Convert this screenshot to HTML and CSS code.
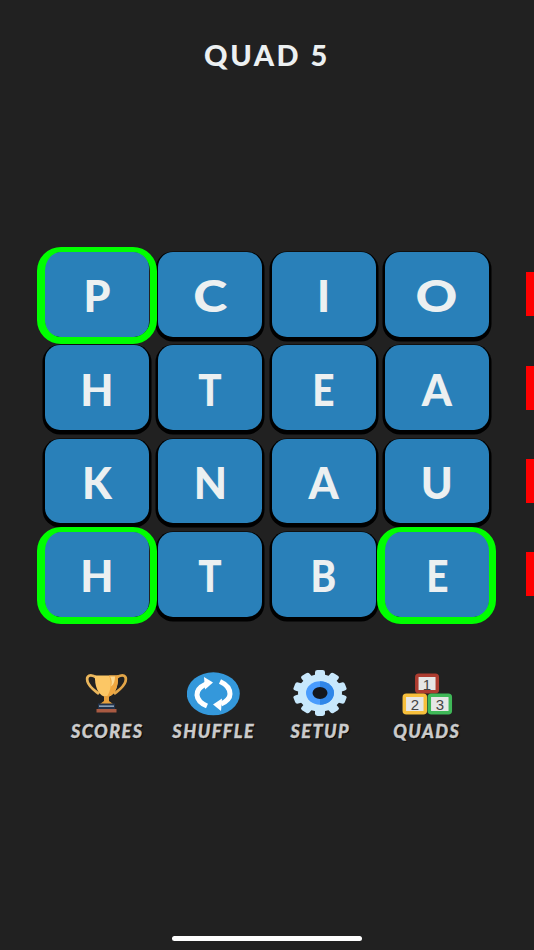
FILE: index.html
```html
<!DOCTYPE html>
<html lang="en">
<head>
<meta charset="utf-8">
<title>Quad 5</title>
<link rel="stylesheet" href="styles.css">
</head>
<body>
<main class="screen">
  <h1 class="title">QUAD 5</h1>
  <section class="board">
    <div class="row">
      <div class="tile selected"><span>P</span></div><div class="tile"><span class="wide">C</span></div><div class="tile"><span>I</span></div><div class="tile"><span class="wide">O</span></div>
      <span class="flag"></span>
    </div>
    <div class="row">
      <div class="tile"><span>H</span></div><div class="tile"><span class="narrow">T</span></div><div class="tile"><span class="narrow">E</span></div><div class="tile"><span>A</span></div>
      <span class="flag"></span>
    </div>
    <div class="row">
      <div class="tile"><span>K</span></div><div class="tile"><span>N</span></div><div class="tile"><span>A</span></div><div class="tile"><span>U</span></div>
      <span class="flag"></span>
    </div>
    <div class="row">
      <div class="tile selected"><span>H</span></div><div class="tile"><span class="narrow">T</span></div><div class="tile"><span class="narrow">B</span></div><div class="tile selected"><span class="narrow">E</span></div>
      <span class="flag"></span>
    </div>
  </section>
  <nav class="toolbar">
    <div class="tool">
      <svg class="icon" viewBox="0 0 54 46" aria-hidden="true">
        <path d="M17 8C10 3 6 6 7.500 11.500 9 17 14 20 19 24" fill="none" stroke="#eab65c" stroke-width="2.800"/>
        <path d="M36 8c7-5 11-2 9.500 3.500C44 17 39 20 34 24" fill="none" stroke="#e2a548" stroke-width="2.800"/>
        <path d="M15 5.500h23c.5 11-3 19-9 21h-5C18 24.500 14.500 16 15 5.500z" fill="#fcc765"/>
        <path d="M29 5.500h9c.5 11-3 19-9 21h-2c4-6 5-14 2-21z" fill="#efa63f"/>
        <path d="M30 6.500c2 3 2 7 1 10 3-2 4-6 4-10z" fill="#fbd992"/>
        <path d="M24 26h5v5l4 3H20l4-3z" fill="#e7a03c"/>
        <rect x="18" y="33.500" width="17" height="5.500" fill="#22324a"/>
        <rect x="19" y="35.500" width="15" height="1.300" fill="#a5bbcf"/>
        <rect x="16.500" y="39" width="20" height="3.500" fill="#a95a42"/>
      </svg>
      <span class="label">SCORES</span>
    </div>
    <div class="tool">
      <svg class="icon" viewBox="0 0 54 46" aria-hidden="true">
        <ellipse cx="26.300" cy="23.800" rx="26.500" ry="21.500" fill="#3498db"/>
        <path d="M19 14Q9.500 18.500 10 25 10.500 32 20 36" fill="none" stroke="#fff" stroke-width="5"/>
        <path d="M17 7l9 5.500-8 7z" fill="#fff"/>
        <path d="M33 11.500Q43 16 43 24 43 30 34 34" fill="none" stroke="#fff" stroke-width="5"/>
        <path d="M35 28.500l-9 6 8 6.500z" fill="#fff"/>
      </svg>
      <span class="label">SHUFFLE</span>
    </div>
    <div class="tool">
      <svg class="icon" viewBox="0 0 54 46" aria-hidden="true">
        <g transform="translate(27 23) scale(1 .85)" fill="#c8e8fc">
          <circle r="22"/>
          <rect x="-5" y="-27" width="10" height="9" rx="2.500"/>
          <rect x="-5" y="-27" width="10" height="9" rx="2.500" transform="rotate(36)"/>
          <rect x="-5" y="-27" width="10" height="9" rx="2.500" transform="rotate(72)"/>
          <rect x="-5" y="-27" width="10" height="9" rx="2.500" transform="rotate(108)"/>
          <rect x="-5" y="-27" width="10" height="9" rx="2.500" transform="rotate(144)"/>
          <rect x="-5" y="-27" width="10" height="9" rx="2.500" transform="rotate(180)"/>
          <rect x="-5" y="-27" width="10" height="9" rx="2.500" transform="rotate(216)"/>
          <rect x="-5" y="-27" width="10" height="9" rx="2.500" transform="rotate(252)"/>
          <rect x="-5" y="-27" width="10" height="9" rx="2.500" transform="rotate(288)"/>
          <rect x="-5" y="-27" width="10" height="9" rx="2.500" transform="rotate(324)"/>
        </g>
        <ellipse cx="27" cy="23" rx="14" ry="11.700" fill="#4a9cfd"/>
        <path d="M27 11.300c8 0 14 5.200 14 11.700s-6 11.700-14 11.700z" fill="#2f86e8"/>
        <ellipse cx="27" cy="23" rx="7.500" ry="6" fill="#14171d"/>
      </svg>
      <span class="label">SETUP</span>
    </div>
    <div class="tool">
      <svg class="icon" viewBox="0 0 54 46" aria-hidden="true">
        <rect x="16.800" y="5.300" width="20.500" height="16.500" rx="2" fill="#e6e6e6" stroke="#ad3c30" stroke-width="3.500"/>
        <rect x="4.300" y="25.300" width="21" height="17.500" rx="2" fill="#e6e6e6" stroke="#f7bf3c" stroke-width="3.500"/>
        <rect x="29.300" y="25.300" width="21" height="17.500" rx="2" fill="#e6e6e6" stroke="#3fb858" stroke-width="3.500"/>
        <text class="digit" x="27" y="19.500">1</text>
        <text class="digit" x="14.800" y="40">2</text>
        <text class="digit" x="39.800" y="40">3</text>
      </svg>
      <span class="label">QUADS</span>
    </div>
  </nav>
  <div class="home-indicator"></div>
</main>
</body>
</html>
```
FILE: styles.css
```css
* { box-sizing: border-box; }
html, body { margin: 0; padding: 0; }
body { background: #212121; overflow: hidden; }
.screen {
  width: 534px;
  height: 950px;
  display: flex;
  flex-direction: column;
  font-family: "Lato", "Liberation Sans", sans-serif;
}
.title {
  margin: 39px 0 0;
  height: 32px;
  line-height: 32px;
  text-align: center;
  color: #ecf0f1;
  font-size: 29px;
  font-weight: 900;
  letter-spacing: 2.5px;
}
.board {
  margin-top: 181px;
  display: flex;
  flex-direction: column;
  gap: 8.5px;
}
.row {
  height: 84.8px;
  padding-left: 45px;
  display: flex;
  align-items: center;
  gap: 9.3px;
}
.tile {
  position: relative;
  width: 104px;
  height: 84.8px;
  padding-top: 3px;
  border-radius: 15px;
  background: #2980b9;
  color: #ecf0f1;
  font-size: 43px;
  font-weight: 900;
  display: flex;
  align-items: center;
  justify-content: center;
  box-shadow: 0 2px 0 2.500px #000;
}
.wide { transform: scaleX(1.2); }
.narrow { transform: scaleX(0.9); }
.tile.selected {
  z-index: 1;
  box-shadow: 0 1.5px 0 0 #000;
}
.tile.selected::after {
  content: "";
  position: absolute;
  inset: -5px -7.5px -7.5px -8px;
  border: solid #0f0;
  border-width: 5px 7.5px 7px 8px;
  border-radius: 24px;
}
.flag {
  width: 8px;
  height: 44px;
  background: #f00;
  margin-left: auto;
}
.toolbar {
  margin-top: 53px;
  padding-left: 54px;
  display: flex;
}
.tool {
  width: 106.5px;
  display: flex;
  flex-direction: column;
  align-items: center;
}
.icon {
  width: 54px;
  height: 46px;
  display: block;
}
.label {
  margin-top: 5px;
  color: #cbcbcb;
  font-size: 18px;
  line-height: 20px;
  font-weight: 900;
  font-style: italic;
  letter-spacing: 1.5px;
  -webkit-text-stroke: 0.4px #cbcbcb;
  text-shadow: 1px 1px 1px #000;
}
.digit {
  font-family: "Liberation Sans", sans-serif;
  font-size: 15px;
  fill: #444;
  text-anchor: middle;
}
.home-indicator {
  margin: auto auto 0;
  position: relative;
  top: -9px;
  width: 190px;
  height: 5px;
  border-radius: 3px;
  background: #fff;
}
```
